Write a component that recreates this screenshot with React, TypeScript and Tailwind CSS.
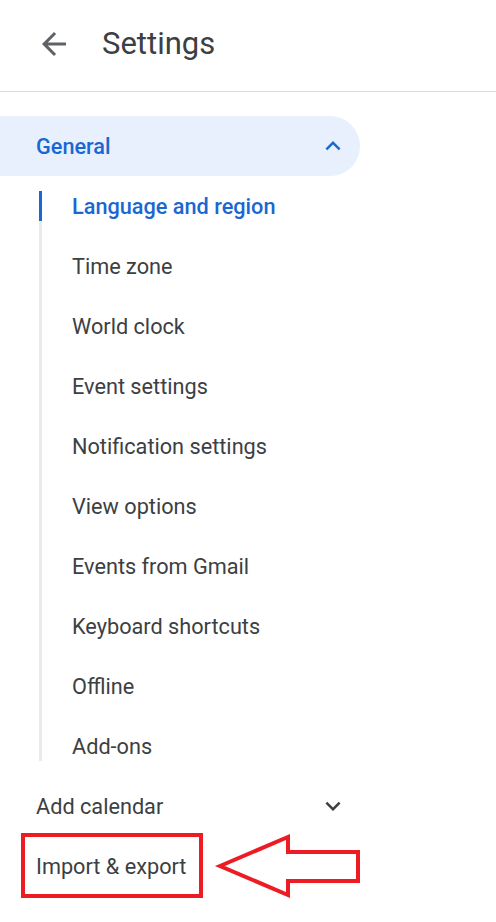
import React from "react";

const SUB_ITEMS = [
  "Time zone",
  "World clock",
  "Event settings",
  "Notification settings",
  "View options",
  "Events from Gmail",
  "Keyboard shortcuts",
  "Offline",
  "Add-ons",
];

const ChevronUp = ({ className }: { className?: string }) => (
  <svg viewBox="0 0 24 24" className={className} fill="currentColor">
    <path d="M7.41 15.41L12 10.83l4.59 4.58L18 14l-6-6-6 6z" />
  </svg>
);

const ChevronDown = ({ className }: { className?: string }) => (
  <svg viewBox="0 0 24 24" className={className} fill="currentColor">
    <path d="M7.41 8.59L12 13.17l4.59-4.58L18 10l-6 6-6-6 1.41-1.41z" />
  </svg>
);

export default function App() {
  return (
    <div
      className="relative w-[496px] h-[922px] bg-white overflow-hidden"
      style={{ fontFamily: "Roboto, 'Noto Sans', sans-serif" }}
    >
      {/* Header */}
      <div className="h-[92px] flex items-center pl-[36px] pb-[4px] border-b border-[#dadce0]">
        <svg viewBox="0 0 24 24" className="w-[36px] h-[36px] text-[#5f6368]" fill="currentColor">
          <path d="M20 11H7.83l5.59-5.59L12 4l-8 8 8 8 1.41-1.41L7.83 13H20v-2z" />
        </svg>
        <h1 className="ml-[30px] text-[31px] text-[#3c4043] leading-none">Settings</h1>
      </div>

      {/* Nav */}
      <nav className="mt-[24px] w-[360px]">
        <div className="h-[60px] flex items-center justify-between pl-[36px] pr-[12px] bg-[#e8f0fe] rounded-r-full">
          <span className="pt-[2px] text-[21.7px] font-medium text-[#1967d2]">General</span>
          <ChevronUp className="w-[30px] h-[30px] text-[#1967d2]" />
        </div>

        <div className="flex flex-col ml-[39px] my-[15px] border-l-[3px] border-[#e8eaed]">
          <div className="flex flex-col -my-[15px]">
            <div className="h-[60px] flex items-center">
              <span className="-ml-[3px] w-[3px] h-[30px] bg-[#1967d2]" />
              <span className="ml-[30px] pt-[2px] text-[21.7px] font-medium text-[#1967d2]">
                Language and region
              </span>
            </div>
            {SUB_ITEMS.map((item) => (
              <div key={item} className="h-[60px] flex items-center pl-[30px]">
                <span className="pt-[2px] text-[21.7px] text-[#3c4043]">{item}</span>
              </div>
            ))}
          </div>
        </div>

        <div className="h-[60px] flex items-center justify-between pl-[36px] pr-[12px]">
          <span className="pt-[2px] text-[21.7px] text-[#3c4043]">Add calendar</span>
          <ChevronDown className="w-[30px] h-[30px] text-[#3c4043]" />
        </div>
        <div className="h-[60px] flex items-center pl-[36px]">
          <span className="pt-[2px] text-[21.7px] text-[#3c4043]">Import &amp; export</span>
        </div>
      </nav>

      {/* Annotation: red box + arrow */}
      <div className="absolute left-[21px] top-[833px] w-[182px] h-[65px] border-4 border-[#ed1c24]" />
      <svg className="absolute left-0 top-0 w-[496px] h-[922px] pointer-events-none" viewBox="0 0 496 922">
        <polygon
          points="220,866 288,837 288,852 358,852 358,881 288,881 288,895"
          fill="none"
          stroke="#ed1c24"
          strokeWidth="4"
          strokeLinejoin="miter"
        />
      </svg>
    </div>
  );
}
